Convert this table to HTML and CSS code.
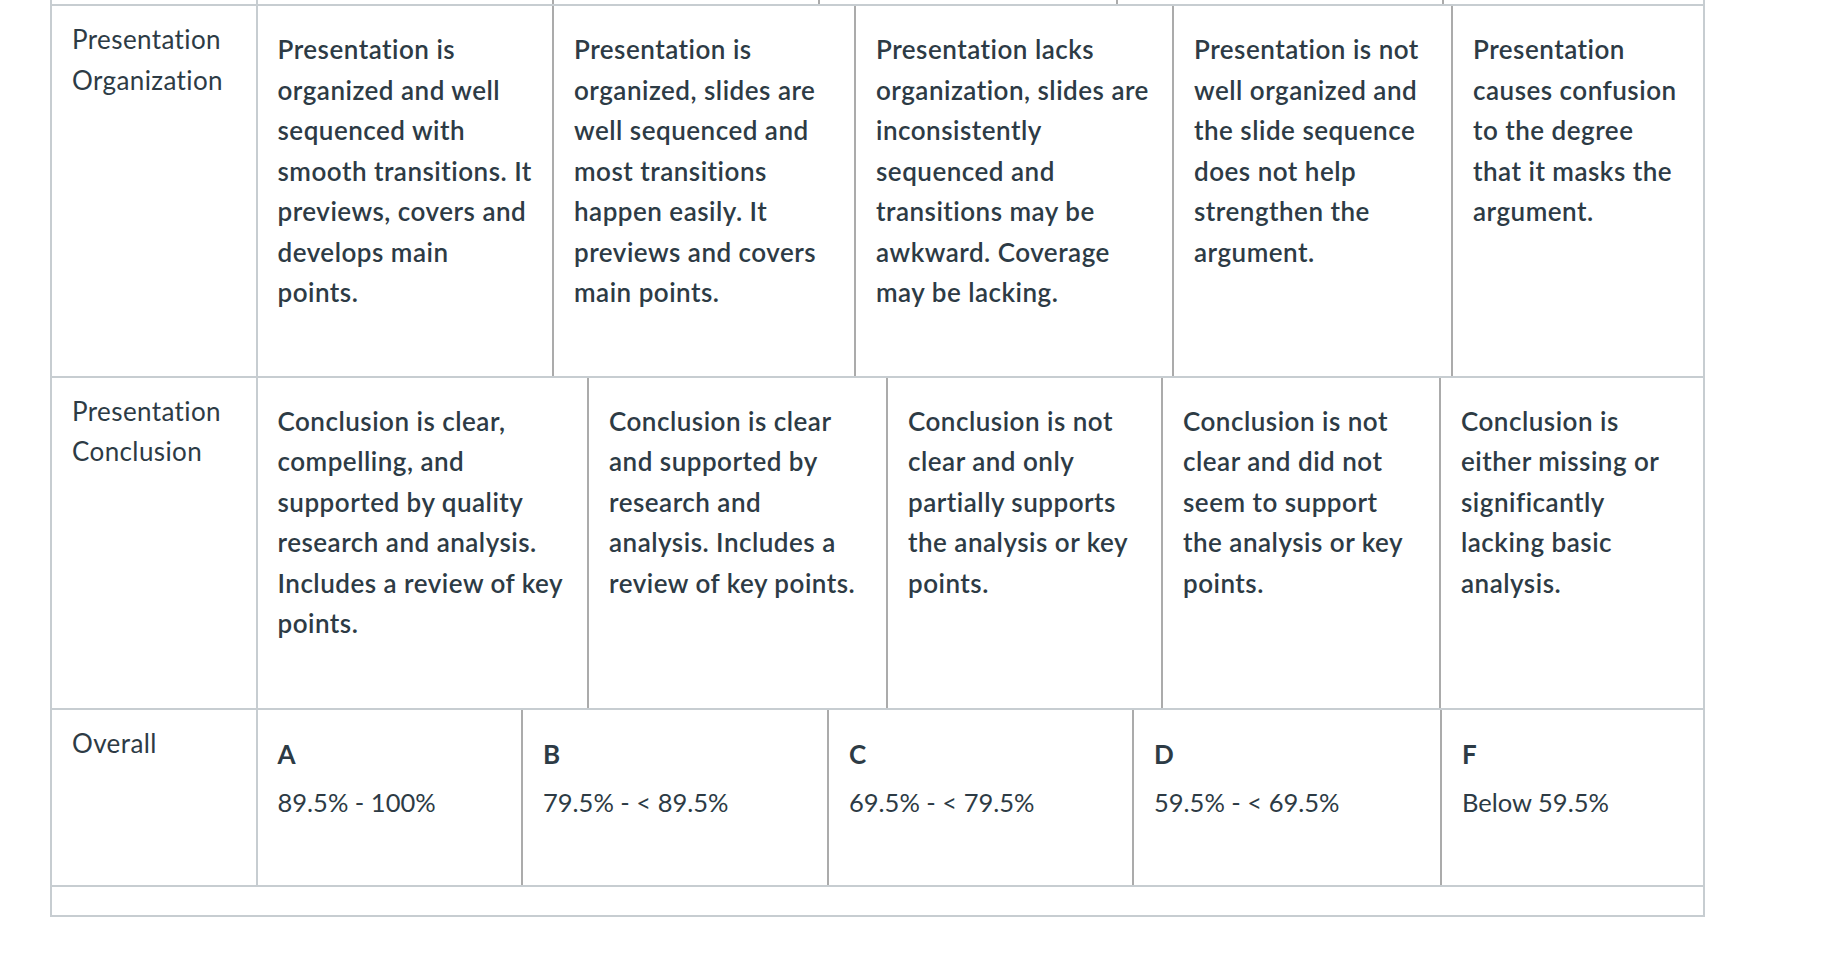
FILE: index.html
```html
<!DOCTYPE html>
<html lang="en">
<head>
<meta charset="utf-8">
<title>Rubric</title>
<link rel="stylesheet" href="styles.css">
</head>
<body>
<div class="rubric">
  <div class="row row-prev">
    <div class="label"></div>
    <div class="rating first"></div>
    <div class="rating"></div>
    <div class="rating"></div>
    <div class="rating"></div>
    <div class="rating"></div>
  </div>
  <div class="row row-org">
    <div class="label">Presentation Organization</div>
    <div class="rating first"><p class="desc">Presentation is organized and well sequenced with smooth transitions. It previews, covers and develops main points.</p></div>
    <div class="rating"><p class="desc">Presentation is organized, slides are well sequenced and most transitions happen easily. It previews and covers main points.</p></div>
    <div class="rating"><p class="desc">Presentation lacks organization, slides are inconsistently sequenced and transitions may be awkward. Coverage may be lacking.</p></div>
    <div class="rating"><p class="desc">Presentation is not well organized and the slide sequence does not help strengthen the argument.</p></div>
    <div class="rating"><p class="desc">Presentation causes confusion to the degree that it masks the argument.</p></div>
  </div>
  <div class="row row-concl">
    <div class="label">Presentation Conclusion</div>
    <div class="rating first"><p class="desc">Conclusion is clear, compelling, and supported by quality research and analysis. Includes a review of key points.</p></div>
    <div class="rating"><p class="desc">Conclusion is clear and supported by research and analysis. Includes a review of key points.</p></div>
    <div class="rating"><p class="desc">Conclusion is not clear and only partially supports the analysis or key points.</p></div>
    <div class="rating"><p class="desc">Conclusion is not clear and did not seem to support the analysis or key points.</p></div>
    <div class="rating"><p class="desc">Conclusion is either missing or significantly lacking basic analysis.</p></div>
  </div>
  <div class="row row-overall">
    <div class="label">Overall</div>
    <div class="rating first"><div class="grade"><p class="grade-title">A</p><p class="grade-range">89.5% - 100%</p></div></div>
    <div class="rating"><div class="grade"><p class="grade-title">B</p><p class="grade-range">79.5% - &lt; 89.5%</p></div></div>
    <div class="rating"><div class="grade"><p class="grade-title">C</p><p class="grade-range">69.5% - &lt; 79.5%</p></div></div>
    <div class="rating"><div class="grade"><p class="grade-title">D</p><p class="grade-range">59.5% - &lt; 69.5%</p></div></div>
    <div class="rating"><div class="grade"><p class="grade-title">F</p><p class="grade-range">Below 59.5%</p></div></div>
  </div>
  <div class="footer-row"></div>
</div>
</body>
</html>
```

FILE: styles.css
```css
* {
  box-sizing: border-box;
}

html, body {
  margin: 0;
  padding: 0;
  background: #ffffff;
}

body {
  font-family: Lato, "Liberation Sans", sans-serif;
  color: #2d3b45;
}

.rubric {
  margin-left: 50px;
  width: 1655px;
  border-left: 2px solid #c7cdd1;
  border-right: 2px solid #c7cdd1;
  border-bottom: 2px solid #c7cdd1;
}

.row {
  display: grid;
  border-bottom: 2px solid #c7cdd1;
}

.row-prev {
  height: 6px;
  grid-template-columns: 206px 294px 266px 298px 326px 261px;
}

.row-org {
  grid-template-columns: 206px 294px 302px 318px 279px 252px;
}

.row-concl {
  grid-template-columns: 206px 329px 299px 275px 278px 264px;
}

.row-overall {
  grid-template-columns: 206px 263px 306px 305px 308px 263px;
}

.label {
  border-right: 2px solid #c7cdd1;
  padding: 13px 18px 0 20px;
  font-size: 26px;
  line-height: 40.5px;
  font-weight: 400;
  letter-spacing: 0.4px;
}

.rating {
  border-left: 2px solid #ababab;
  padding: 23px 20px 63px 20px;
}

.rating.first {
  border-left: none;
  padding-left: 19.5px;
}

.row-prev .label,
.row-prev .rating {
  padding: 0;
}

.desc {
  margin: 0;
  font-size: 26px;
  line-height: 40.5px;
  font-weight: 600;
  letter-spacing: 0.5px;
}

.row-concl .rating {
  padding-bottom: 64px;
}

.row-overall .rating {
  padding-top: 24px;
  padding-bottom: 62px;
}

.grade-title {
  margin: 0;
  font-size: 26px;
  line-height: 40.5px;
  font-weight: 700;
}

.grade-range {
  margin: 8px 0 0 0;
  font-size: 25.5px;
  line-height: 40.5px;
  font-weight: 400;
}

.footer-row {
  height: 28px;
}
```
